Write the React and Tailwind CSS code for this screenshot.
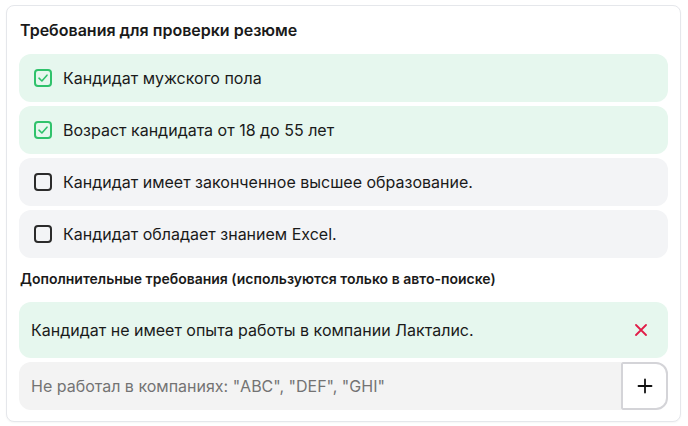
import { useState } from "react";

const requirements = [
  { text: "Кандидат мужского пола", checked: true },
  { text: "Возраст кандидата от 18 до 55 лет", checked: true },
  { text: "Кандидат имеет законченное высшее образование.", checked: false },
  { text: "Кандидат обладает знанием Excel.", checked: false },
];

const CheckBox = ({ checked }) =>
  checked ? (
    <span className="flex h-[18px] w-[18px] items-center justify-center rounded-[4px] border-2 border-[#2fc26b]">
      <svg width="14" height="14" viewBox="0 0 14 14" fill="none">
        <path d="M3 7.2 L5.9 10 L11 4.2" stroke="#2fc26b" strokeWidth="1.6" strokeLinecap="round" strokeLinejoin="round" />
      </svg>
    </span>
  ) : (
    <span className="h-[18px] w-[18px] rounded-[4px] border-2 border-[#2b2b2b]" />
  );

export default function App() {
  const [items, setItems] = useState(requirements);
  const [value, setValue] = useState("");

  return (
    <div className="p-[5px_7px_4px_6px] font-['Inter',sans-serif] text-[#1a1a1a]">
      <div className="rounded-lg border border-[#e5e7eb] bg-white px-3 pb-[11px] pt-[14px] shadow-[0_1px_2px_rgba(0,0,0,0.04)]">
        <h2 className="px-px text-[16px] font-semibold leading-5">Требования для проверки резюме</h2>

        <div className="mt-[14px] flex flex-col gap-1">
          {items.map((item, i) => (
            <div
              key={item.text}
              className={`flex h-12 cursor-pointer items-center gap-[11px] rounded-xl px-[15px] ${item.checked ? "bg-[#e6f7ee]" : "bg-[#f3f4f6]"}`}
              onClick={() =>
                setItems((prev) => prev.map((p, j) => (j === i ? { ...p, checked: !p.checked } : p)))
              }
            >
              <CheckBox checked={item.checked} />
              <span className="text-[16px] leading-5">{item.text}</span>
            </div>
          ))}
        </div>

        <h3 className="mt-3 px-px text-[14px] font-semibold leading-[18px]">
          Дополнительные требования (используются только в авто-поиске)
        </h3>

        <div className="mt-[14px] flex h-14 items-center justify-between rounded-xl bg-[#e6f7ee] pl-3 pr-[21px]">
          <span className="text-[16px] leading-5">Кандидат не имеет опыта работы в компании Лакталис.</span>
          <svg width="12" height="12" viewBox="0 0 12 12" fill="none">
            <path d="M1 1 L11 11 M11 1 L1 11" stroke="#e11d48" strokeWidth="1.8" strokeLinecap="round" />
          </svg>
        </div>

        <div className="mt-1 flex h-12">
          <input
            value={value}
            onChange={(e) => setValue(e.target.value)}
            placeholder={'Не работал в компаниях: "ABC", "DEF", "GHI"'}
            className="min-w-0 flex-1 rounded-l-xl bg-[#f3f3f3] px-3 text-[16px] text-[#1a1a1a] outline-none placeholder:text-[#737373]"
          />
          <button className="flex w-[47px] items-center justify-center rounded-r-xl rounded-l-[2px] border-2 border-[#d4d4d8] bg-white">
            <svg width="16" height="16" viewBox="0 0 16 16" fill="none">
              <path d="M8 1.5 V14.5 M1.5 8 H14.5" stroke="#111" strokeWidth="1.8" strokeLinecap="round" />
            </svg>
          </button>
        </div>
      </div>
    </div>
  );
}
